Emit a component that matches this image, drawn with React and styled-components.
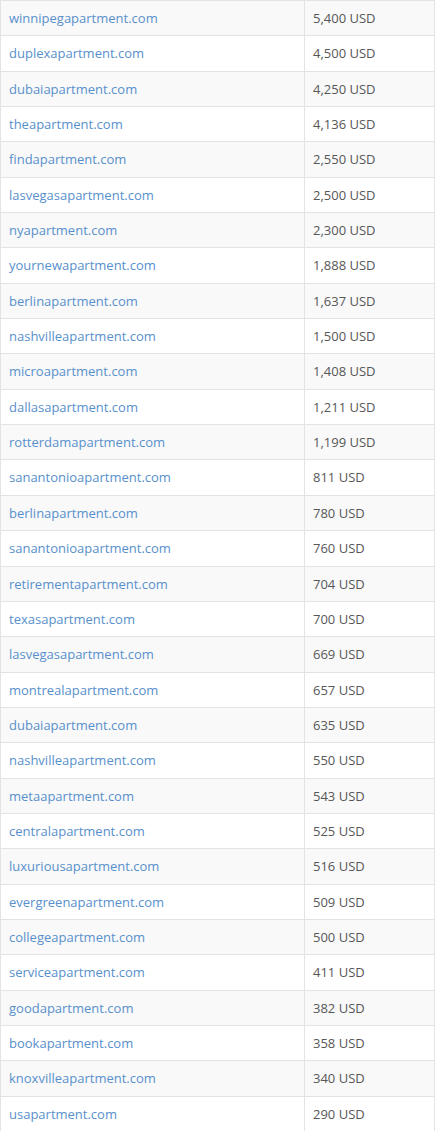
// Domain sales table

import React from "react";
import styled, { createGlobalStyle } from "styled-components";

const sales = [
  ["winnipegapartment.com", "5,400 USD"],
  ["duplexapartment.com", "4,500 USD"],
  ["dubaiapartment.com", "4,250 USD"],
  ["theapartment.com", "4,136 USD"],
  ["findapartment.com", "2,550 USD"],
  ["lasvegasapartment.com", "2,500 USD"],
  ["nyapartment.com", "2,300 USD"],
  ["yournewapartment.com", "1,888 USD"],
  ["berlinapartment.com", "1,637 USD"],
  ["nashvilleapartment.com", "1,500 USD"],
  ["microapartment.com", "1,408 USD"],
  ["dallasapartment.com", "1,211 USD"],
  ["rotterdamapartment.com", "1,199 USD"],
  ["sanantonioapartment.com", "811 USD"],
  ["berlinapartment.com", "780 USD"],
  ["sanantonioapartment.com", "760 USD"],
  ["retirementapartment.com", "704 USD"],
  ["texasapartment.com", "700 USD"],
  ["lasvegasapartment.com", "669 USD"],
  ["montrealapartment.com", "657 USD"],
  ["dubaiapartment.com", "635 USD"],
  ["nashvilleapartment.com", "550 USD"],
  ["metaapartment.com", "543 USD"],
  ["centralapartment.com", "525 USD"],
  ["luxuriousapartment.com", "516 USD"],
  ["evergreenapartment.com", "509 USD"],
  ["collegeapartment.com", "500 USD"],
  ["serviceapartment.com", "411 USD"],
  ["goodapartment.com", "382 USD"],
  ["bookapartment.com", "358 USD"],
  ["knoxvilleapartment.com", "340 USD"],
  ["usapartment.com", "290 USD"],
];

const GlobalStyle = createGlobalStyle`
  body {
    margin: 0;
    background: #fff;
    font-family: "Open Sans", "Liberation Sans", sans-serif;
  }
`;

const Table = styled.table`
  width: 435px;
  border-collapse: collapse;
  border-left: 1px solid #e3e3e3;
  border-right: 1px solid #e3e3e3;
  font-size: 13px;
  color: #575757;
`;

const Row = styled.tr`
  background: ${(p) => (p.$striped ? "#f9f9f9" : "#fff")};
`;

const Cell = styled.td`
  padding: 8px 8px;
  line-height: 18.35px;
  border-top: 1px solid #e3e3e3;
  vertical-align: top;
  white-space: nowrap;
  &:first-child {
    width: 287px;
  }
  & + & {
    border-left: 1px solid #e3e3e3;
  }
`;

const Domain = styled.a`
  color: #5890cc;
  text-decoration: none;
`;

const App = () => {
  return (
    <>
      <GlobalStyle />
      <Table>
        <tbody>
          {sales.map(([domain, price], i) => (
            <Row key={i} $striped={i % 2 === 0}>
              <Cell>
                <Domain href="#">{domain}</Domain>
              </Cell>
              <Cell>{price}</Cell>
            </Row>
          ))}
        </tbody>
      </Table>
    </>
  );
};

export default App;
